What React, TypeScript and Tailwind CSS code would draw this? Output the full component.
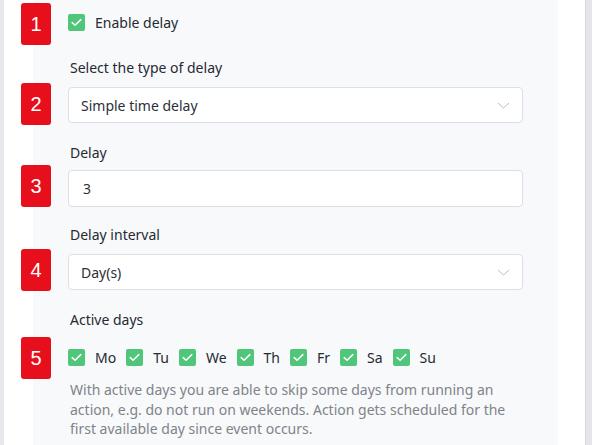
import React from "react";

const font = { fontFamily: '"Noto Sans", "Open Sans", sans-serif' };

function Badge({ n }: { n: number }) {
  return (
    <div className="flex h-[42px] w-[30px] shrink-0 items-center justify-center rounded-[3px] bg-[#e60f1b] text-[20px] text-white [font-family:'Liberation_Sans',Arial,sans-serif]">
      {n}
    </div>
  );
}

function Check() {
  return (
    <span className="flex h-[17px] w-[17px] shrink-0 items-center justify-center rounded-[2px] bg-[#4fc679]">
      <svg width="11" height="9" viewBox="0 0 11 9" fill="none">
        <path d="M1.2 4.6 L4.1 7.3 L9.8 1.6" stroke="white" strokeWidth="1.5" strokeLinecap="round" strokeLinejoin="round" />
      </svg>
    </span>
  );
}

function Chevron() {
  return (
    <svg width="13" height="7" viewBox="0 0 13 7" fill="none">
      <path d="M1 1 L6.5 6 L12 1" stroke="#b9bcc2" strokeWidth="1" />
    </svg>
  );
}

function Label({ children, className = "" }: { children: React.ReactNode; className?: string }) {
  return <div className={`pl-[49px] text-[14px] leading-[20px] text-[#262a31] ${className}`}>{children}</div>;
}

export default function App() {
  const days = ["Mo", "Tu", "We", "Th", "Fr", "Sa", "Su"];
  return (
    <div className="flex h-[445px] w-[592px] overflow-hidden bg-white" style={font}>
      <div className="w-[4px] shrink-0 bg-[#e6e8ec]" />
      <div className="relative min-w-0 flex-1">
        <div className="absolute bottom-0 left-[29px] right-[27px] top-0 bg-[#f8f9fb]" />
        <div className="relative flex flex-col pl-[17px] pr-[62px]">
          {/* 1 */}
          <div className="mt-[3px] flex items-center gap-[17px]">
            <Badge n={1} />
            <div className="-mt-[4px] flex items-center gap-[10px]">
              <Check />
              <span className="text-[14px] text-[#262a31]">Enable delay</span>
            </div>
          </div>

          {/* 2 */}
          <Label className="mt-[13px]">Select the type of delay</Label>
          <div className="mt-[5px] flex items-end gap-[17px]">
            <Badge n={2} />
            <div className="mb-[2px] flex h-[36px] flex-1 items-center justify-between rounded-[4px] border border-[#dcdfe6] bg-white pl-[12px] pr-[12px] text-[14px] text-[#2d3038]">
              <span>Simple time delay</span>
              <Chevron />
            </div>
          </div>

          {/* 3 */}
          <Label className="mt-[18px]">Delay</Label>
          <div className="mt-[2px] flex items-end gap-[17px]">
            <Badge n={3} />
            <div className="flex h-[37px] flex-1 items-center rounded-[4px] border border-[#dcdfe6] bg-white pl-[14px] text-[14px] text-[#2d3038]">
              3
            </div>
          </div>

          {/* 4 */}
          <Label className="mt-[18px]">Delay interval</Label>
          <div className="mt-[4px] flex items-end gap-[17px]">
            <Badge n={4} />
            <div className="mb-[1px] flex h-[36px] flex-1 items-center justify-between rounded-[4px] border border-[#dcdfe6] bg-white pl-[12px] pr-[12px] text-[14px] text-[#2d3038]">
              <span>Day(s)</span>
              <Chevron />
            </div>
          </div>

          {/* 5 */}
          <Label className="mt-[19px]">Active days</Label>
          <div className="mt-[7px] flex items-center gap-[17px]">
            <Badge n={5} />
            <div className="-mt-[2px] flex items-center gap-[10px]">
              {days.map((d) => (
                <div key={d} className="flex items-center gap-[10px]">
                  <Check />
                  <span className="text-[14px] text-[#262a31]">{d}</span>
                </div>
              ))}
            </div>
          </div>
          <p className="mt-[1px] pl-[49px] text-[14px] leading-[19.5px] text-[#7f838a]">
            With active days you are able to skip some days from running an action, e.g. do not run on weekends. Action gets scheduled for the first available day since event occurs.
          </p>
        </div>
      </div>
      <div className="w-[7px] shrink-0 border-l border-[#d6d8dd] bg-[#e4e6eb]" />
    </div>
  );
}
